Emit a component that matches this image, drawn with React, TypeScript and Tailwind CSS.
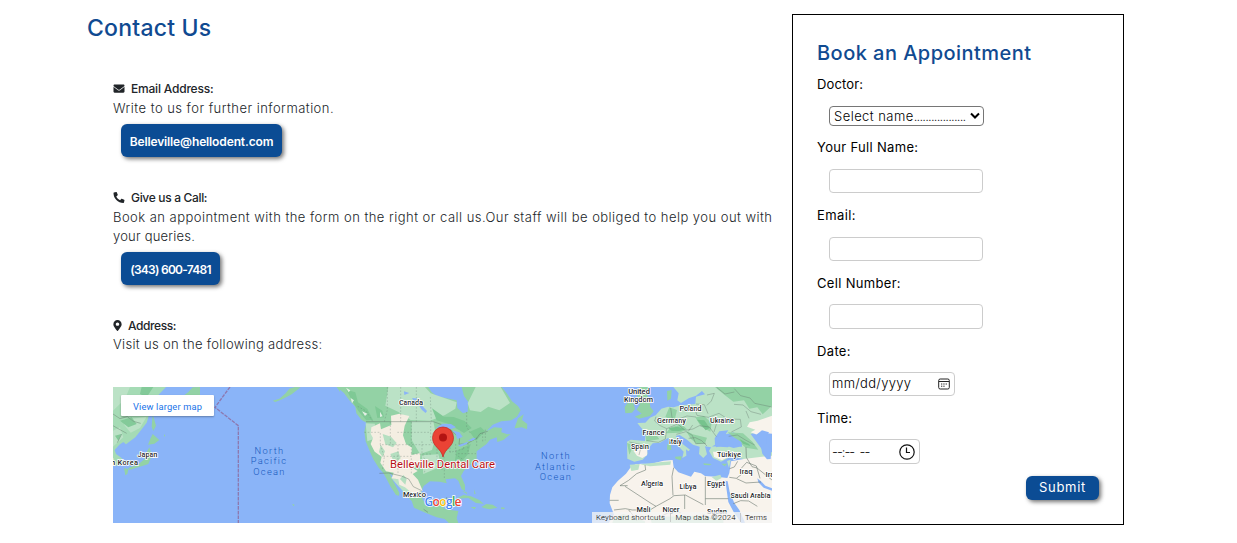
import type { ReactNode } from "react";
import { FaEnvelope, FaPhone, FaMapMarkerAlt } from "react-icons/fa";

function ContactTitle({ icon, className, children }: { icon: ReactNode; className: string; children: ReactNode }) {
  return (
    <div className="flex h-[19px] items-center whitespace-nowrap pb-0.5 text-[12px] font-medium text-[#212529]">
      {icon}
      <span className={className}>{children}</span>
    </div>
  );
}

function Label({ className, children }: { className: string; children: ReactNode }) {
  return (
    <div className="flex h-5 items-center whitespace-nowrap pt-px text-[13px] font-normal text-black">
      <span className={className}>{children}</span>
    </div>
  );
}

function WorldMap() {
  const haloed = "fill-[#26292c] stroke-white text-[7.5px] font-medium [paint-order:stroke] [stroke-width:1.6px]";
  const sea = "fill-[#1558bd] text-[9.3px] tracking-[1.3px]";
  return (
    <svg viewBox="0 0 659 136" className="block h-[136px] w-[659px] bg-[#8ab4f8] font-[Roboto,sans-serif]" textAnchor="middle">
      {/* East Asia and the Pacific */}
      <g transform="translate(-3 -3) scale(.33333)">
        <path fill="#a5dbb5" d="M9 9H168L150 28 135 45 122 70 115 100 110 116 95 136 76 160 57 174 48 181 40 174 28 182 14 198 18 210 32 220 43 230 38 242 9 246Z" />
        <path fill="#bbe2c6" d="M9 9H60L45 45 9 80ZM60 105 110 98 90 132 62 146 42 122ZM9 140 30 130 40 160 9 188Z" />
        <path fill="#83ca99" d="M30 110 65 100 80 120 55 130ZM95 9 130 9 110 40 90 30ZM15 155 34 150 25 170Z" />
        <path fill="none" stroke="#7a9d85" strokeWidth="2" d="M9 90 30 104 52 98 70 112 92 118M9 125 28 136 50 148M35 150 22 176" />
        <path fill="#93d2a5" d="M220 36 235 24 248 10 270 9 270 34ZM128 92 132 104 138 125 130 141 125 128ZM122 162 128 150 148 168 133 179 114 182ZM118 190 126 214 115 240 85 250 58 258 54 252 84 242 104 224 112 200ZM42 252 55 256 52 270 46 274ZM488 50 508 44 527 28 538 14 555 9 572 10 545 31 520 44 496 54ZM680 9H690V24ZM162 150 166 155 162 158ZM546 360 554 362 551 367Z" />
        <path fill="none" stroke="#8d79b0" strokeWidth="4" strokeDasharray="11 3" d="M360 9 315 70 385 125V420" />
      </g>
      {/* North and Central America */}
      <g transform="translate(217 -3) scale(.33333)">
        <path fill="#93d2a5" d="M0 9H295L304 23 320 37 350 43 380 49 382 72 399 88 413 83 415 54 402 36 395 9H515L532 30 546 52 564 66 572 79 561 98 544 109 514 112 488 122 470 141 493 130 516 132 514 145 532 151 542 150 520 168 502 174 500 160 480 167 469 181 454 191 440 202 440 228 420 243 401 261 393 276 405 303 405 321 395 316 385 290 375 283 347 286 350 298 330 293 300 292 281 306 274 322 277 345 291 366 316 368 331 345 351 342 350 364 339 373 355 377 385 381 380 403 386 420H360L344 405 320 400 286 386 252 371 245 351 229 335 211 308 192 278 179 267 188 289 208 326 207 335 198 333 181 307 171 287 160 267 146 251 130 226 119 201 107 172 103 143 109 116 94 107 79 88 76 68 58 49 42 27 20 9Z" />
        <path fill="#bbe2c6" d="M175 9H285L302 28 380 55 376 74 345 93 300 110 242 108 204 83 166 65ZM245 112 310 112 318 155 306 198 270 210 245 168ZM413 58 437 9 512 9 540 57 508 79 475 68 452 84 420 79ZM275 214 325 211 335 247 280 270ZM182 280 236 294 258 333 227 330 200 301ZM107 118 135 119 131 165 112 172Z" />
        <path fill="#7fc995" d="M49 17 76 25 84 55 112 75 129 108 109 109 85 81 70 57ZM135 66 157 80 162 100 142 102ZM306 73 342 98 371 99 404 111 425 132 402 147 356 120 320 109ZM379 200 422 180 414 211 390 238 372 250ZM419 143 452 129 465 142 438 170Z" />
        <path fill="#f4eee2" d="M124 130 150 118 153 136 184 123 183 95 208 89 238 96 224 125 219 154 228 180 246 191 244 213 271 207 270 235 238 245 263 261 248 270 264 287 278 320 249 330 225 310 208 302 205 286 185 283 191 266 168 262 151 236 155 218 134 203 122 180 129 162 122 149Z" />
        <path fill="#b5dfc0" d="M158 150 183 158 200 177 189 190 166 181ZM181 210 205 202 212 223 194 239ZM152 182 165 202 158 219 147 204ZM220 273 230 284 226 302 210 285Z" />
        <path fill="#e2efe4" d="M62 42 72 49 66 58ZM96 82 112 89 105 96ZM48 11 61 19 56 25ZM150 83 158 97 150 99Z" />
        <g fill="none" stroke="#60736a" strokeWidth="1.8" strokeOpacity=".75">
          <path d="M108 113H310L350 127 370 144 389 164 387 181 411 179 440 163 450 149 473 142M148 268 176 267 214 276 236 285 250 308 275 320M281 376 294 385M350 340V374" />
          <path strokeDasharray="5 5" strokeWidth="1.5" strokeOpacity=".6" d="M83 67 108 81 128 112M172 9V78L163 113M212 9V113M259 9V113M301 39 304 112M410 84V128L421 148M103 145H151V182H304M151 182 163 219 157 258M181 114V184M202 145H303M204 182V267M244 114V210H305M160 217H244V271M276 172V208L284 226V265M302 116V174L321 184V252L343 257V284M322 184 350 181 361 205 400 195M342 218V252L384 250M360 180V210M377 180V211L401 228M384 209H438M401 179V199M414 178V209M440 161V190M458 147V174M466 137V169" />
        </g>
        <path fill="#8ab4f8" d="M318 132 337 119 363 120 378 130 364 135 344 132ZM343 142 353 137 350 174 344 171ZM366 139 388 145 398 158 382 166 377 150ZM384 184 414 173 411 180 391 188ZM412 171 430 161 438 164 425 171ZM268 67 275 64 291 81 287 87 276 78ZM246 42 266 44 252 52ZM222 22 238 27 223 33Z" />
        <path fill="#93d2a5" d="M555 128 564 103 581 91 576 108 592 120 591 136 575 130 554 133ZM378 344 400 333 423 337 448 348 461 359 438 357 415 342ZM454 369 469 360 488 362 502 371 479 376 464 373ZM422 369 438 369 434 376ZM514 370 525 371 522 376 513 374ZM396 321 409 324 412 331M432 316 437 329 433 331Z" />
      </g>
      {/* Europe, Africa and the Middle East */}
      <g transform="translate(432 -3) scale(.33333)">
        <path fill="#bbe2c6" d="M385 9H681V135L638 120 641 145 617 150 650 195 681 205V226L596 225 557 218 528 233 504 222 492 201 500 187 522 188 548 190 560 182 591 188 590 174 563 159 568 145 542 151 550 139 523 142 509 163 510 182 497 190 480 187 486 211 475 222 462 210 464 188 444 182 426 167 404 153 392 156 409 177 435 197 430 202 423 196 424 215 412 222 416 203 382 168 369 162 345 176 323 178 306 199 308 210 293 227 268 233 247 224 246 173 257 167 300 171 302 147 286 128 277 117 301 116 315 101 332 94 349 74 369 68 386 70 407 64 451 60 453 38 480 31 471 21 453 35 431 43 408 57 397 49 401 28Z" />
        <path fill="#93d2a5" d="M510 9H681V65L653 91 637 70 613 74 597 49 565 53 536 31ZM378 130 410 121 426 136 404 146 362 148ZM302 145 326 140 343 166 303 172ZM423 140 443 151 486 161 480 178 456 180 437 164ZM451 100 477 96 500 117 496 143 467 127ZM548 145 594 148 623 174 640 197 602 191ZM246 177 266 184 253 212ZM373 70 396 78 388 113 361 98Z" />
        <path fill="#76c38d" d="M370 133 398 128 421 136 402 141 380 140ZM583 165 612 180 616 186 594 179ZM456 107 478 109 494 132 482 139Z" />
        <path fill="#93d2a5" d="M285 60 277 48 276 21 285 17 283 9H311L303 28 313 45 316 69 326 82 315 96 282 104 269 98 290 89 275 77ZM249 54 264 53 270 75 261 86 241 88 239 70ZM366 21 380 18 378 44 367 50ZM367 181 378 178 379 198 366 197ZM371 166 379 164 377 176ZM390 218 410 217 408 229 392 224ZM475 238 500 240 494 244 477 243ZM529 239 547 239 539 247Z" />
        <path fill="#f8f3ec" d="M202 310 219 290 243 269 257 250 272 241 290 239 316 240 356 230 383 228 386 250 400 265 438 278 448 263 468 268 480 276 521 279 547 282 553 267 558 232 596 225 681 215V417H191L207 392 194 358 195 333ZM614 115 638 110 681 95V149L661 147 638 153 617 145 631 137 606 128ZM265 200 289 192 307 198 306 214 292 222 276 215ZM504 203 535 204 549 220 531 229 507 219Z" />
        <path fill="#bbe2c6" d="M254 242 284 240 280 257 259 261ZM285 241 350 234 378 232 376 242 315 247ZM500 279 526 272 530 282 514 290ZM546 231 557 227 552 252ZM207 402 235 390 300 412 300 417 202 417ZM315 400 450 395 535 405 535 417 320 417Z" />
        <path fill="#8ab4f8" d="M510 181 512 164 526 149 540 145 544 153 565 159 589 174 591 187 566 192 535 183 514 190ZM634 152 651 139 672 145 664 158 664 178 679 194 677 225 666 226 652 209 648 190 641 175ZM541 290 548 292 554 324 568 357 583 378 600 416 589 417 566 384 550 354ZM637 283 647 291 661 305 681 313V320L656 311 640 295ZM543 108 554 115 548 119Z" />
        <g fill="none" stroke="#637169" strokeWidth="2" strokeOpacity=".85">
          <path strokeWidth="1.5" strokeOpacity=".75" d="M305 170 340 175 361 165 365 134 344 124 329 111 333 98M365 134 398 120 420 139 444 135 463 125 493 129 514 158M377 72 381 100 397 119M394 151 423 143 442 154 452 179 483 178M448 70 456 94 490 100 522 88 548 105 586 106 589 129 559 144M400 105 426 96 453 99M453 60 478 62 489 89M486 33 508 28 499 51 486 64M551 157 577 153 603 169 629 183M516 115 507 144M430 142 443 123M431 163 451 161 470 170 486 186M282 213 290 182 253 174M568 14 587 35 615 42 629 58 681 69M567 61 594 63 618 83 648 91M603 81 612 103M515 10 540 30 568 24" />
          <path d="M300 243 302 258 275 269 251 289 225 305H248M194 349H221M240 307 318 358 333 367 375 344 387 335 421 333 475 362M386 251 381 277 384 334M481 278V344H550M481 344V363M419 333V375M207 378 241 374 262 378H315L333 367M251 378 265 395 275 410M350 396 375 384 407 386M553 280 574 283 595 267 587 255 605 235 634 246 645 283M575 284 603 297 648 294M565 359 587 350 611 351 637 367M554 254 568 249 578 232M603 190 604 220 621 248 636 252 681 288M473 390 500 405 511 392 530 404" />
        </g>
      </g>
      <g className={haloed}>
        <text x="298" y="17.5" textLength="24">Canada</text>
        <text x="34.5" y="70" textLength="20">Japan</text>
        <text x="11.5" y="78" textLength="27">h Korea</text>
        <text x="301.5" y="110" textLength="23">Mexico</text>
        <text x="526" y="7">United</text>
        <text x="525.5" y="15" textLength="29">Kingdom</text>
        <text x="577.5" y="24" textLength="22">Poland</text>
        <text x="558.5" y="36" textLength="29">Germany</text>
        <text x="609" y="36" textLength="24">Ukraine</text>
        <text x="540.5" y="48" textLength="22">France</text>
        <text x="562.5" y="57" textLength="13">Italy</text>
        <text x="527" y="62" textLength="18">Spain</text>
        <text x="616" y="70" textLength="24">Türkiye</text>
        <text x="633" y="86.5" textLength="13">Iraq</text>
        <text x="659" y="90">Iran</text>
        <text x="539" y="99" textLength="22">Algeria</text>
        <text x="575" y="102" textLength="17">Libya</text>
        <text x="603" y="99" textLength="18">Egypt</text>
        <text x="637.5" y="111" textLength="40">Saudi Arabia</text>
        <text x="530.5" y="125" textLength="14">Mali</text>
        <text x="558" y="125" textLength="17">Niger</text>
        <text x="604" y="127" textLength="20">Sudan</text>
      </g>
      <g className={sea}>
        <text x="156.5" y="66.500">North</text>
        <text x="156" y="77">Pacific</text>
        <text x="156.5" y="88">Ocean</text>
        <text x="443" y="71.5">North</text>
        <text x="442.5" y="82.500">Atlantic</text>
        <text x="443" y="93">Ocean</text>
      </g>
      <path d="M330 70C328 61 319.500 60 319.500 50.500A10.500 10.500 0 0 1 340.500 50.500C340.500 60 332 61 330 70Z" fill="#ea4335" stroke="#c5221f" strokeWidth=".7" />
      <circle cx="330" cy="50.500" r="4" fill="#b31412" />
      <text x="329.500" y="81" textLength="105" className="fill-[#b80f14] stroke-white text-[11.3px] font-normal [paint-order:stroke] [stroke-width:1.6px]">Belleville Dental Care</text>
      <text x="330" y="119" textLength="37" className="stroke-white font-['Open_Sans',sans-serif] text-[12px] font-semibold [paint-order:stroke] [stroke-width:1.5px]">
        <tspan fill="#4285f4">G</tspan><tspan fill="#ea4335">o</tspan><tspan fill="#fbbc04">o</tspan><tspan fill="#4285f4">g</tspan><tspan fill="#34a853">l</tspan><tspan fill="#ea4335">e</tspan>
      </text>
      <path fill="#f5f5f5" fillOpacity=".78" d="M479 125H659V136H479Z" />
      <path stroke="#bbb" strokeWidth=".7" d="M557.500 126V135M627.500 126V135" />
      <g className="fill-black text-[7.8px]">
        <text x="517.500" y="133" textLength="69">Keyboard shortcuts</text>
        <text x="592.500" y="133" textLength="60">Map data ©2024</text>
        <text x="643" y="133" textLength="22">Terms</text>
      </g>
    </svg>
  );
}

export default function App() {
  const action = "ml-2 mt-1.5 flex h-[33px] items-center justify-center whitespace-nowrap rounded-md bg-[#0b4c94] pt-px text-[12px] font-semibold text-white shadow-[2px_2px_4px_rgba(0,0,0,0.55)]";
  const field = "ml-3 block rounded border border-[#ccc] bg-white";
  return (
    <div className="flex h-[543px] w-[1237px] overflow-hidden bg-white font-[Inter,sans-serif]">
      <section className="ml-[87px] w-[685px] shrink-0 pt-2.5">
        <h1 className="h-9 text-[23px] font-medium leading-9 text-[#104a91]"><span className="tracking-[0.22px]">Contact Us</span></h1>
        <div className="ml-[26px] mt-[34px] text-[13px] font-light leading-[19px] text-[#212529]">
          <ContactTitle className="ml-1.5 tracking-[-0.2px]" icon={<FaEnvelope className="h-[11px] w-3" />}>Email Address:</ContactTitle>
          <p className="whitespace-nowrap tracking-[0.46px]">Write to us for further information.</p>
          <a className={`${action} w-[161px] tracking-[-0.13px]`}>Belleville@hellodent.com</a>
          <div className="mt-8">
            <ContactTitle className="ml-1.5 tracking-[-0.33px]" icon={<FaPhone className="h-[11px] w-3 -scale-x-100" />}>Give us a Call:</ContactTitle>
            <p className="whitespace-nowrap tracking-[0.465px]">Book an appointment with the form on the right or call us.Our staff will be obliged to help you out with</p>
            <p className="tracking-[0.2px]">your queries.</p>
            <a className={`${action} w-[99px] tracking-[-0.75px]`}>(343) 600-7481</a>
          </div>
          <div className="mt-8">
            <ContactTitle className="ml-1.5 tracking-[-0.4px]" icon={<FaMapMarkerAlt className="h-[11px] w-[9px]" />}>Address:</ContactTitle>
            <p className="-mt-px tracking-[0.31px]">Visit us on the following address:</p>
          </div>
          <div className="relative mt-[33px] h-[136px] w-[659px] overflow-hidden">
            <WorldMap />
            <a className="absolute left-2 top-2 flex h-[21px] w-[93px] items-center justify-center whitespace-nowrap rounded-[1px] bg-white pt-px font-[Roboto,sans-serif] text-[9.3px] font-normal tracking-[0.15px] text-[#1a73e8] shadow-[0_1px_2px_rgba(0,0,0,0.3)]">View larger map</a>
          </div>
        </div>
      </section>
      <form className="ml-5 mt-3.5 h-[511px] w-[332px] shrink-0 border border-black pl-6 pr-6 pt-[22px]">
        <h2 className="h-8 whitespace-nowrap text-[20px] font-medium leading-8 text-[#104a91]"><span className="tracking-[0.46px]">Book an Appointment</span></h2>
        <div className="mt-[5px]"><Label className="tracking-[0.15px]">Doctor:</Label></div>
        <div className="ml-3 mt-3 flex h-5 w-[155px] items-center justify-between rounded border border-[#767676] bg-white pl-1 pr-[3px] text-[13px] font-light leading-[18px] text-black" role="combobox" aria-expanded="false" aria-controls="doctor-list" tabIndex={0}>
          <span className="whitespace-nowrap pb-px tracking-[0.45px]">Select name<span className="tracking-[-0.8px]">..................</span></span>
          <svg className="h-2 w-2.5 shrink-0" viewBox="0 0 10 8" fill="none" stroke="black" strokeWidth="2"><path d="M1 1.500 5 5.500 9 1.500" /></svg>
        </div>
        <div className="mt-[11px]"><Label className="tracking-[0.32px]">Your Full Name:</Label></div>
        <input className={`${field} mt-3 h-6 w-[154px]`} />
        <div className="mt-3"><Label className="tracking-[0.4px]">Email:</Label></div>
        <input className={`${field} mt-3 h-6 w-[154px]`} />
        <div className="mt-3"><Label className="tracking-[0.32px]">Cell Number:</Label></div>
        <input className={`${field} mt-[11px] h-[25px] w-[154px]`} />
        <div className="mt-3"><Label className="tracking-[0.35px]">Date:</Label></div>
        <div className="ml-3 mt-[11px] flex h-6 w-[126px] items-center justify-between rounded border border-[#ccc] pl-0.5 pr-1 text-[13px] font-light">
          <span className="tracking-[0.3px]">mm/dd/yyyy</span>
          <svg className="h-3 w-3" viewBox="0 0 12 12" fill="none" stroke="#222"><rect x=".7" y="1" width="10.600" height="10" rx="1.500" /><path d="M1 3.500H11" /><path d="M3 6H9M3 8.200H7" strokeDasharray="1.300 1" /></svg>
        </div>
        <div className="mt-3"><Label className="tracking-[0.2px]">Time:</Label></div>
        <div className="ml-3 mt-[11px] flex h-[25px] w-[91px] items-center justify-between rounded border border-[#ccc] pl-0.5 pr-1 text-[13px] font-light">
          <span className="whitespace-pre pt-0.5 tracking-[-1px]">--:--  --</span>
          <svg className="h-4 w-4" viewBox="0 0 16 16" fill="none" stroke="#111" strokeWidth="1.200"><circle cx="8" cy="8" r="7.200" /><path d="M7.500 3.500V8.500H11" /></svg>
        </div>
        <div className="mt-3 flex justify-end">
          <button type="button" className="h-6 w-[73px] rounded-md bg-[#0b4c94] text-[13px] font-normal text-white shadow-[2px_2px_4px_rgba(0,0,0,0.55)]"><span className="tracking-[0.7px]">Submit</span></button>
        </div>
      </form>
    </div>
  );
}
